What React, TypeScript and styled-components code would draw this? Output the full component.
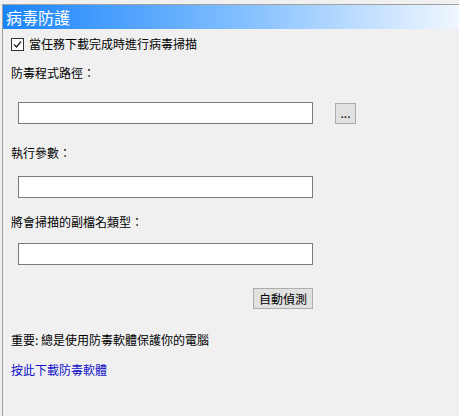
import styled, { createGlobalStyle } from "styled-components"

const GlobalStyle = createGlobalStyle`
  html, body {
    margin: 0;
    padding: 0;
    background: #f0f0f0;
  }
  body {
    font-family: "Noto Sans CJK TC", "Liberation Sans", sans-serif;
    font-size: 12px;
    color: #000;
  }
`

const Page = styled.div`
  height: 416px;
  padding: 4px 0 0 2px;
  box-sizing: border-box;
  overflow: hidden;
`

const Panel = styled.div`
  height: 100%;
  border-top: 1px solid #a0a0a0;
  border-left: 1px solid #a0a0a0;
  display: flex;
  flex-direction: column;
`

const Header = styled.div`
  height: 24px;
  display: flex;
  align-items: center;
  padding-left: 3px;
  background: linear-gradient(to right, #1a84fb, #7dbcff 50%, #f0f7ff);
  color: #fff;
  font-size: 16px;
  line-height: 24px;
`

const Body = styled.div`
  display: flex;
  flex-direction: column;
  padding-left: 8px;
`

const CheckRow = styled.label`
  display: flex;
  align-items: center;
  gap: 5px;
  height: 16px;
  margin-top: 7px;
  line-height: 16px;
`

const Box = styled.span`
  width: 11px;
  height: 11px;
  border: 1px solid #333;
  background: #fff;
  display: flex;
  align-items: center;
  justify-content: center;
`

const Label = styled.div<{ $top: number }>`
  line-height: 16px;
  margin-top: ${(p) => p.$top}px;
`

const FieldRow = styled.div<{ $top: number }>`
  display: flex;
  align-items: center;
  gap: 22px;
  margin-top: ${(p) => p.$top}px;
  margin-left: 7px;
`

const TextBox = styled.input`
  width: 295px;
  height: 22px;
  box-sizing: border-box;
  border: 1px solid #7a7a7a;
  background: #fff;
  margin: 0;
  padding: 0 3px;
  font: inherit;
  outline: none;
`

const Button = styled.button<{ $w: number; $h: number }>`
  width: ${(p) => p.$w}px;
  height: ${(p) => p.$h}px;
  box-sizing: border-box;
  border: 1px solid #adadad;
  background: #e1e1e1;
  margin: 0;
  padding: 0;
  font: inherit;
  font-size: 12px;
  color: #000;
  line-height: 1;
`

const ButtonRow = styled.div`
  width: 295px;
  display: flex;
  justify-content: flex-end;
  margin-top: 23px;
  margin-left: 7px;
`

const Link = styled.a`
  color: #1010c8;
  text-decoration: none;
  line-height: 16px;
  margin-top: 14px;
  cursor: pointer;
`

const App = () => {
  return (
    <Page>
      <GlobalStyle />
      <Panel>
        <Header>病毒防護</Header>
        <Body>
          <CheckRow>
            <Box>
              <svg width="9" height="9" viewBox="0 0 9 9">
                <path d="M1 4.5 L3.5 7 L8 1.5" fill="none" stroke="#222" strokeWidth="1.3" />
              </svg>
            </Box>
            當任務下載完成時進行病毒掃描
          </CheckRow>
          <Label $top={13}>防毒程式路徑：</Label>
          <FieldRow $top={21}>
            <TextBox />
            <Button $w={21} $h={21}>...</Button>
          </FieldRow>
          <Label $top={21}>執行參數：</Label>
          <FieldRow $top={15}>
            <TextBox />
          </FieldRow>
          <Label $top={16}>將會掃描的副檔名類型：</Label>
          <FieldRow $top={13}>
            <TextBox />
          </FieldRow>
          <ButtonRow>
            <Button $w={60} $h={21}>自動偵測</Button>
          </ButtonRow>
          <Label $top={23}>重要: 總是使用防毒軟體保護你的電腦</Label>
          <Link>按此下載防毒軟體</Link>
        </Body>
      </Panel>
    </Page>
  )
}

export default App
